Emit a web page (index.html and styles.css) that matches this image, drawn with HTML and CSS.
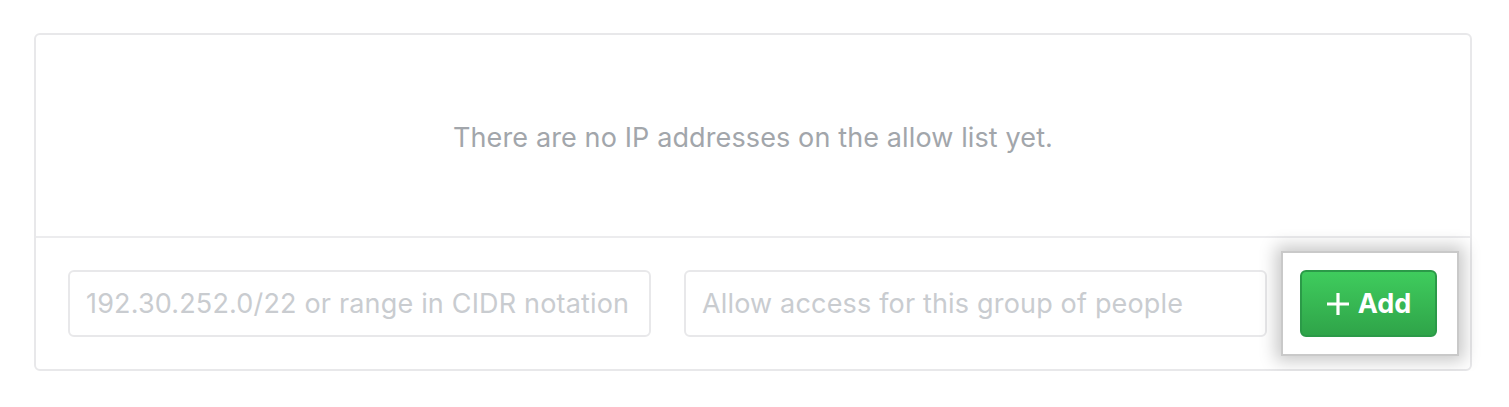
FILE: index.html
```html
<!DOCTYPE html>
<html>
<head>
<meta charset="utf-8">
<link rel="stylesheet" href="styles.css">
</head>
<body>
<div class="box">
  <div class="blank">There are no IP addresses on the allow list yet.</div>
  <div class="form">
    <input class="field" type="text" placeholder="192.30.252.0/22 or range in CIDR notation">
    <input class="field" type="text" placeholder="Allow access for this group of people">
    <div class="btn-wrap">
      <button class="btn" type="button">
        <svg class="plus" width="24" height="24" viewBox="0 0 24 24"><path d="M12 1v22M1 12h22" stroke="#fff" stroke-width="3.2" fill="none"/></svg>
        <span>Add</span>
      </button>
    </div>
  </div>
</div>
</body>
</html>
```

FILE: styles.css
```css
html, body {
  margin: 0;
  padding: 0;
  background: #ffffff;
}
body {
  padding: 33px 38px 0 34px;
  font-family: Inter, Roboto, "Liberation Sans", Arial, sans-serif;
}
.box {
  width: 1434px;
  border: 2px solid #e8e8ea;
  border-radius: 6px;
}
.blank {
  height: 203px;
  display: flex;
  align-items: center;
  justify-content: center;
  font-size: 27px;
  letter-spacing: 0.12px;
  color: #a2a6ab;
  border-bottom: 2px solid #ececee;
  padding-top: 3px;
  box-sizing: border-box;
}
.form {
  display: flex;
  align-items: center;
  gap: 33px;
  padding: 32px 32px 32px 32px;
}
.field {
  width: 583px;
  height: 67px;
  box-sizing: border-box;
  border: 2px solid #e8e8ea;
  border-radius: 6px;
  padding: 0 16px;
  font-family: Inter, Roboto, "Liberation Sans", Arial, sans-serif;
  font-size: 27px;
  letter-spacing: 0.17px;
  color: #333;
  background: #fff;
  outline: none;
}
.field::placeholder {
  color: #c9ccd0;
}
.btn-wrap {
  position: relative;
  z-index: 0;
}
.btn-wrap::before {
  content: "";
  position: absolute;
  top: -19px;
  left: -19px;
  right: -22px;
  bottom: -19px;
  background: #fff;
  border: 2px solid #c9c9c9;
  box-shadow: 0 0 16px 5px rgba(0, 0, 0, 0.22);
  z-index: -1;
}
.btn {
  width: 137px;
  height: 67px;
  box-sizing: border-box;
  display: flex;
  align-items: center;
  justify-content: center;
  gap: 8px;
  border: 2px solid #2b9a48;
  border-radius: 6px;
  background: linear-gradient(#3fcc5d, #2fa449);
  color: #fff;
  font-family: Inter, "Liberation Sans", Arial, sans-serif;
  font-weight: bold;
  font-size: 27px;
  padding: 0;
  cursor: pointer;
}
.plus {
  display: block;
}
```
